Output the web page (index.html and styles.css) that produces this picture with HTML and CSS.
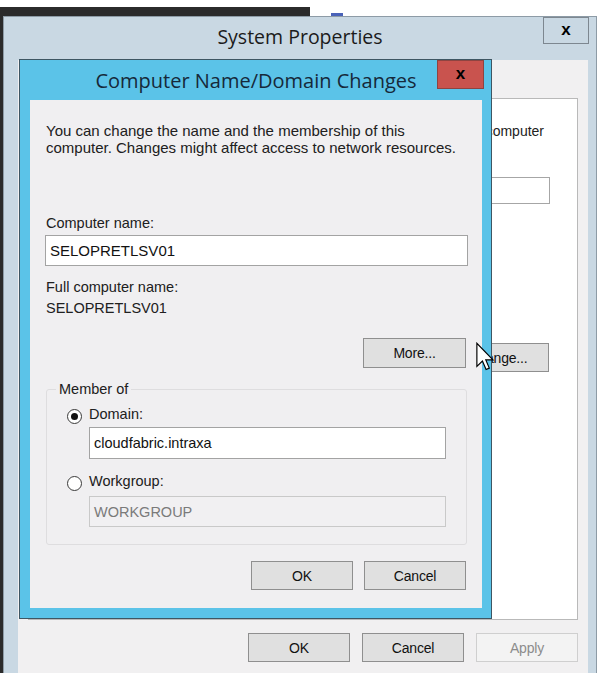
FILE: index.html
```html
<!DOCTYPE html>
<html>
<head>
<meta charset="utf-8">
<link rel="stylesheet" href="styles.css">
</head>
<body>
<div class="screen">
  <div class="bgwin"></div>
  <div class="bgicon"></div>

  <div class="syswin">
    <div class="sys-titlebar">
      <span class="sys-title">System Properties</span>
      <div class="sys-close">x</div>
    </div>
    <div class="sys-body">
      <div class="tabpanel">
        <div class="tp-text">computer</div>
        <div class="tp-row"><div class="tp-input"></div></div>
        <div class="tp-row"><div class="btn tp-change">Change...</div></div>
      </div>
      <div class="sys-footer">
        <div class="btn">OK</div>
        <div class="btn">Cancel</div>
        <div class="btn disabled">Apply</div>
      </div>
    </div>
  </div>

  <div class="dialog">
    <div class="dlg-titlebar">
      <span class="dlg-title">Computer Name/Domain Changes</span>
      <div class="dlg-close">x</div>
    </div>
    <div class="dlg-content">
      <p class="intro">You can change the name and the membership of this<br>computer. Changes might affect access to network resources.</p>
      <div class="label lbl-compname">Computer name:</div>
      <div class="input input-name">SELOPRETLSV01</div>
      <div class="label lbl-full">Full computer name:</div>
      <div class="label full-value">SELOPRETLSV01</div>
      <div class="right-row more-row"><div class="btn">More...</div></div>
      <fieldset class="group">
        <legend>Member of</legend>
        <div class="radio-row row-domain"><span class="radio checked"></span><span>Domain:</span></div>
        <div class="input input-sub">cloudfabric.intraxa</div>
        <div class="radio-row row-wg"><span class="radio"></span><span>Workgroup:</span></div>
        <div class="input input-sub input-disabled">WORKGROUP</div>
      </fieldset>
      <div class="right-row dlg-buttons">
        <div class="btn">OK</div>
        <div class="btn">Cancel</div>
      </div>
    </div>
  </div>

  <svg class="cursor" width="19" height="30" viewBox="0 0 13 20">
    <path d="M0.6,0.6 L0.6,16.4 L4.4,12.8 L6.9,18.6 L9.1,17.6 L6.7,12.0 L11.6,12.0 Z" fill="#ffffff" stroke="#000000" stroke-width="0.8" stroke-linejoin="miter"/>
  </svg>
</div>
</body>
</html>
```
FILE: styles.css
```css
html, body {
  margin: 0;
  padding: 0;
  background: #ffffff;
}
.screen {
  position: relative;
  width: 601px;
  height: 673px;
  overflow: hidden;
  background: #ffffff;
  font-family: "Liberation Sans", Arial, sans-serif;
  font-size: 14.5px;
  color: #111;
}
.bgwin {
  position: absolute;
  left: 0;
  top: 7px;
  width: 310px;
  height: 666px;
  background: #2b2b2b;
}
.bgicon {
  position: absolute;
  left: 331px;
  top: 13px;
  width: 12px;
  height: 3px;
  background: #4a62b8;
}
/* System Properties window */
.syswin {
  position: absolute;
  left: 3px;
  top: 16px;
  width: 592px;
  height: 657px;
  background: #c9d8e3;
  border: 1px solid #8d9ba6;
  border-bottom: none;
  display: flex;
  flex-direction: column;
}
.sys-titlebar {
  height: 43px;
  position: relative;
  display: flex;
  align-items: center;
  justify-content: center;
}
.sys-title {
  font-family: "Open Sans", "Noto Sans", sans-serif;
  font-size: 19.5px;
  color: #1b1b1b;
  margin-top: -4px;
  margin-left: 0px;
}
.sys-close {
  position: absolute;
  left: 539px;
  top: 0px;
  width: 46px;
  height: 27px;
  box-sizing: border-box;
  border: 1px solid #7d8790;
  display: flex;
  align-items: center;
  justify-content: center;
  font-family: "Liberation Sans", Arial, sans-serif;
  font-weight: bold;
  font-size: 17px;
  line-height: 1;
  color: #000;
  padding-bottom: 3px;
}
.sys-body {
  margin-left: 14px;
  margin-right: 8px;
  flex: 1;
  background: #f1f0f1;
  display: flex;
  flex-direction: column;
}
.tabpanel {
  margin-left: 10px;
  margin-top: 38px;
  width: 550px;
  height: 522px;
  box-sizing: border-box;
  background: #ffffff;
  border: 1px solid #b9b9b9;
  display: flex;
  flex-direction: column;
  align-items: flex-end;
}
.tp-text {
  margin-top: 24px;
  margin-right: 33px;
  line-height: 17px;
  font-size: 14px;
  color: #222;
  white-space: nowrap;
}
.tp-row {
  display: flex;
  justify-content: flex-end;
}
.tp-input {
  margin-top: 37px;
  margin-right: 27px;
  width: 400px;
  height: 27px;
  box-sizing: border-box;
  border: 1px solid #a6a6a6;
  background: #fff;
}
.tp-change {
  margin-top: 139px;
  margin-right: 28px;
  width: 101px;
  height: 30px;
}
.sys-footer {
  display: flex;
  justify-content: flex-end;
  gap: 12px;
  margin-top: 13px;
  margin-right: 10px;
}
.btn {
  width: 102px;
  height: 29px;
  box-sizing: border-box;
  border: 1px solid #8f8f8f;
  background: #e0e0e0;
  display: flex;
  align-items: center;
  justify-content: center;
  font-size: 14px;
  color: #111;
  letter-spacing: -0.2px;
}
.btn.disabled {
  border-color: #cfcfcf;
  background: #f3f3f3;
  color: #8c8c8c;
}
/* Dialog */
.dialog {
  position: absolute;
  left: 19px;
  top: 59px;
  width: 473px;
  height: 560px;
  box-sizing: border-box;
  background: #5bc3e8;
  border: 1px solid #3e5663;
  display: flex;
  flex-direction: column;
  padding: 0 9px 10px 10px;
}
.dlg-titlebar {
  height: 40px;
  position: relative;
  display: flex;
  align-items: center;
  justify-content: center;
}
.dlg-title {
  font-family: "Open Sans", "Noto Sans", sans-serif;
  font-size: 20px;
  color: #16293a;
  margin-top: 1px;
  margin-left: 0px;
}
.dlg-close {
  position: absolute;
  left: 407px;
  top: 0;
  width: 47px;
  height: 29px;
  box-sizing: border-box;
  background: #c9534e;
  border: 1px solid #8e4441;
  display: flex;
  align-items: center;
  justify-content: center;
  font-weight: bold;
  font-size: 17px;
  line-height: 1;
  padding-bottom: 3px;
  color: #000;
}
.dlg-content {
  flex: 1;
  background: #f0eff1;
  display: flex;
  flex-direction: column;
}
.intro {
  margin: 22px 0 0 16px;
  line-height: 17px;
  font-size: 15px;
  color: #202020;
}
.label {
  margin-left: 16px;
  line-height: 17px;
  color: #202020;
}
.lbl-compname { margin-top: 59px; }
.input {
  box-sizing: border-box;
  border: 1px solid #a3a3a3;
  background: #ffffff;
  display: flex;
  align-items: center;
  padding-left: 4px;
  font-size: 14.5px;
  color: #111;
}
.input-name {
  margin: 3px 0 0 15px;
  width: 423px;
  height: 31px;
  font-size: 15px;
}
.lbl-full { margin-top: 13px; }
.full-value { margin-top: 4px; }
.right-row {
  display: flex;
  justify-content: flex-end;
  margin-right: 16px;
}
.more-row { margin-top: 21px; }
.more-row .btn { width: 103px; height: 30px; }
.group {
  margin: 13px 15px 0 16px;
  padding: 0 0 17px 0;
  border: 1px solid #dedddf;
  border-radius: 3px;
  min-inline-size: 0;
  display: flex;
  flex-direction: column;
}
.group legend {
  margin-left: 9px;
  padding: 0 3px;
  line-height: 17px;
  color: #202020;
}
.radio-row {
  display: flex;
  align-items: center;
  gap: 7px;
  margin-left: 20px;
  height: 17px;
  color: #202020;
}
.row-domain { margin-top: 7px; }
.row-wg { margin-top: 13px; }
.radio {
  width: 15px;
  height: 15px;
  box-sizing: border-box;
  border: 1px solid #3a3a3a;
  border-radius: 50%;
  background: #ffffff;
  display: flex;
  align-items: center;
  justify-content: center;
  margin-top: 5px;
}
.radio.checked::after {
  content: "";
  width: 7px;
  height: 7px;
  border-radius: 50%;
  background: #111;
}
.input-sub {
  margin: 5px 0 0 42px;
  width: 357px;
  height: 32px;
}
.input-disabled {
  margin-top: 7px;
  height: 31px;
  background: #f1f0f2;
  border-color: #c9c9c9;
  color: #7a7a7a;
}
.dlg-buttons {
  margin-top: 16px;
  gap: 11px;
}
.cursor {
  position: absolute;
  left: 476px;
  top: 342px;
}
```
